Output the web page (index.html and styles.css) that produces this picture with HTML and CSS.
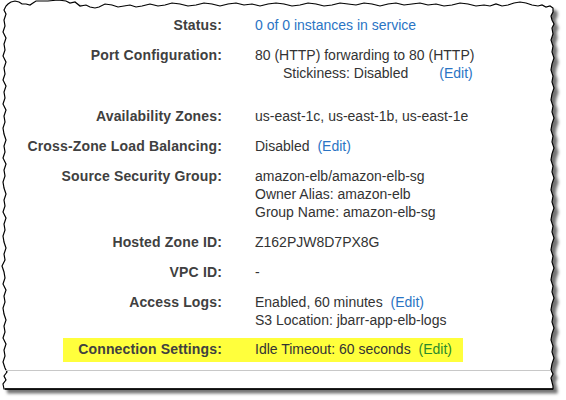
FILE: index.html
```html
<!DOCTYPE html>
<html>
<head>
<meta charset="utf-8">
<link rel="stylesheet" href="styles.css">
</head>
<body>
<div class="page">
  <svg class="frame" width="566" height="400" viewBox="0 0 566 400" aria-hidden="true">
    <defs>
      <filter id="sh" x="-5%" y="-5%" width="115%" height="115%">
        <feDropShadow dx="4" dy="4" stdDeviation="1.6" flood-color="#000" flood-opacity="0.55"/>
      </filter>
    </defs>
    <path filter="url(#sh)" fill="#fff" stroke="#000" stroke-width="1.2" stroke-linejoin="miter"
      d="M4,10 L6,6 L8,4 L11,2 L15,1 L19,2 L22,4 L26,4 L30,5 L33,3 L36,1 L48,1 L58,0 L66,1 L70,3 L75,2 L80,6 L86,5 L90,7 L95,8 L99,7 L105,4 L112,5 L118,7 L124,6 L130,5 L136,7 L142,6 L150,4 L158,6 L165,5 L172,3 L180,4 L188,6 L196,5 L204,3 L212,4 L220,6 L228,4 L236,3 L244,5 L252,4 L260,6 L268,4 L276,3 L284,4 L292,6 L300,5 L308,3 L316,4 L324,6 L332,5 L340,3 L348,4 L356,5 L364,3 L372,4 L380,6 L388,4 L396,3 L404,5 L412,4 L420,3 L428,5 L436,4 L444,6 L452,5 L460,3 L468,4 L476,6 L484,5 L490,6 L496,4 L502,6 L508,5 L514,3 L520,2 L526,3 L532,5 L538,6 L542,5 L546,7 L550,6 L553,8
      L553,12 L551,16 L552,20 L554,24 L552,28 L553,34 L551,40 L553,46 L552,52 L554,58 L552,64 L551,70 L553,76 L552,82 L554,88 L552,94 L551,100 L553,106 L552,112 L554,118 L552,124 L551,130 L553,136 L552,142 L554,148 L552,154 L551,160 L553,166 L552,172 L554,178 L552,184 L551,190 L553,196 L552,202 L554,208 L552,214 L551,220 L553,226 L552,232 L554,238 L552,244 L551,250 L553,256 L552,262 L554,268 L552,274 L551,280 L553,286 L552,292 L554,298 L552,304 L551,310 L553,316 L552,322 L554,328 L552,334 L551,340 L553,346 L552,352 L554,358 L552,364 L551,370 L553,374 L551,378 L552,382 L553,386 L553,389
      L4,389 L3,384 L6,380 L4,376 L7,372 L5,368 L3,362 L5,356 L4,350 L6,344 L3,338 L5,332 L4,326 L6,320 L4,314 L3,308 L5,302 L4,296 L6,290 L3,284 L5,278 L4,272 L2,266 L5,260 L4,254 L6,248 L4,242 L3,236 L5,230 L4,224 L6,218 L3,212 L5,206 L4,200 L6,194 L4,188 L3,182 L5,176 L4,170 L6,164 L3,158 L5,152 L4,146 L6,140 L4,134 L3,128 L5,122 L4,116 L6,110 L3,104 L5,98 L4,92 L6,86 L3,80 L5,74 L4,68 L6,62 L3,56 L5,50 L4,44 L6,38 L3,32 L5,26 L4,20 L6,14 Z"/>
    <line x1="5" y1="389" x2="553" y2="389" stroke="#000" stroke-width="1.5"/>
  </svg>

  <div class="content">
    <div class="row">
      <div class="label">Status:</div>
      <div class="value"><a class="link">0 of 0 instances in service</a></div>
    </div>
    <div class="row row-port">
      <div class="label">Port Configuration:</div>
      <div class="value">
        <div>80 (HTTP) forwarding to 80 (HTTP)</div>
        <div class="sticky"><span>Stickiness: Disabled</span><a class="link">(Edit)</a></div>
      </div>
    </div>
    <div class="row">
      <div class="label">Availability Zones:</div>
      <div class="value">us-east-1c, us-east-1b, us-east-1e</div>
    </div>
    <div class="row">
      <div class="label">Cross-Zone Load Balancing:</div>
      <div class="value">Disabled <a class="link edit">(Edit)</a></div>
    </div>
    <div class="row">
      <div class="label">Source Security Group:</div>
      <div class="value">
        <div>amazon-elb/amazon-elb-sg</div>
        <div>Owner Alias: amazon-elb</div>
        <div>Group Name: amazon-elb-sg</div>
      </div>
    </div>
    <div class="row">
      <div class="label">Hosted Zone ID:</div>
      <div class="value">Z162PJW8D7PX8G</div>
    </div>
    <div class="row">
      <div class="label">VPC ID:</div>
      <div class="value">-</div>
    </div>
    <div class="row">
      <div class="label">Access Logs:</div>
      <div class="value">
        <div>Enabled, 60 minutes <a class="link edit">(Edit)</a></div>
        <div>S3 Location: jbarr-app-elb-logs</div>
      </div>
    </div>
    <div class="row row-hl">
      <div class="label">Connection Settings:</div>
      <div class="value">Idle Timeout: 60 seconds <a class="link edit green">(Edit)</a></div>
    </div>
    <div class="rule"></div>
  </div>
</div>
</body>
</html>
```
FILE: styles.css
```css
html, body {
  margin: 0;
  padding: 0;
  background: #fff;
}
.page {
  position: relative;
  width: 566px;
  height: 400px;
  overflow: hidden;
  font-family: "Liberation Sans", Arial, sans-serif;
  font-size: 14px;
  line-height: 18px;
  color: #3a3a3a;
}
.frame {
  position: absolute;
  left: 0;
  top: 0;
}
.content {
  position: relative;
  padding-top: 16px;
  display: flex;
  flex-direction: column;
  gap: 12px;
}
.row {
  display: grid;
  grid-template-columns: 222px 1fr;
  column-gap: 33px;
}
.label {
  text-align: right;
  font-weight: bold;
  color: #404040;
  letter-spacing: 0.15px;
}
.value {
  color: #333;
}
.link {
  color: #2a74c4;
}
.edit {
  margin-left: 4px;
}
.green {
  color: #2b8a2b;
}
.sticky {
  display: flex;
  padding-left: 28px;
  gap: 31px;
}
.row-port {
  margin-bottom: 13px;
}
.row-hl {
  margin-top: -3px;
  margin-left: 63px;
  width: 400px;
  grid-template-columns: 159px 1fr;
  background: #ffff3c;
  padding: 2px 0 4px;
}
.rule {
  margin: -4px 15px 0 5px;
  height: 1px;
  background: #c8c8c8;
}
```
